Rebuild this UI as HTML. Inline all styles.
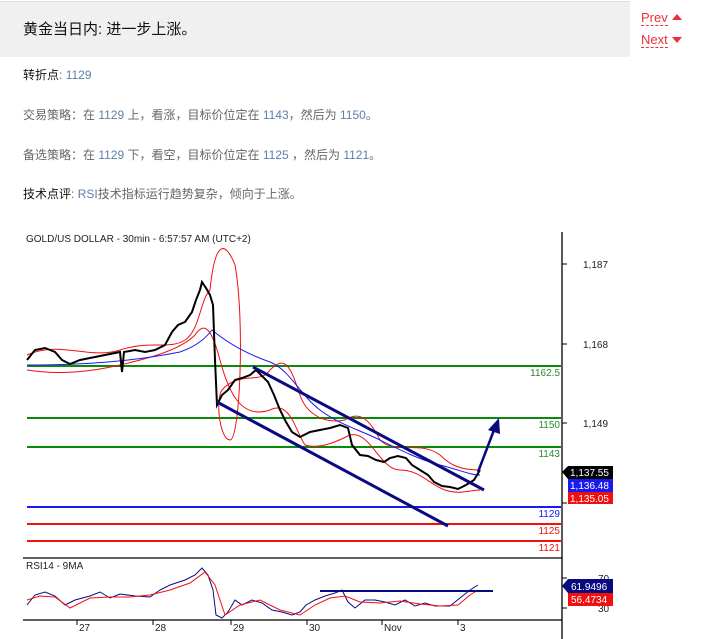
<!DOCTYPE html>
<html><head><meta charset="utf-8"><style>
body{margin:0;width:713px;height:639px;background:#fff;font-family:"Liberation Sans","Noto Sans CJK SC",sans-serif;position:relative;overflow:hidden}
.hdr{position:absolute;left:0;top:1px;width:630px;height:55px;background:#f0f0f0;border-top:1px solid #ddd}
.hdr span{position:absolute;left:23px;top:16px;font-size:15px;color:#111}
.nav{position:absolute;left:641px;font-size:13px;color:#e8303a;border-bottom:1px dashed #e8303a;line-height:15px}
.tri{position:absolute;left:672px;width:0;height:0;border-left:5px solid transparent;border-right:5px solid transparent}
.p{position:absolute;left:23px;font-size:12px;color:#666;white-space:nowrap}
.p b{font-weight:normal;color:#111}
.n{color:#5b7fa8}
</style></head><body>
<div class="hdr"><span>黄金当日内: 进一步上涨。</span></div>
<div class="nav" style="top:10px">Prev</div><div class="tri" style="top:14px;border-bottom:6px solid #e8303a"></div>
<div class="nav" style="top:32px">Next</div><div class="tri" style="top:37px;border-top:6px solid #e8303a"></div>
<div class="p" style="top:66px"><b>转折点</b>: <span class="n">1129</span></div>
<div class="p" style="top:106px">交易策略：在 <span class="n">1129</span> 上，看涨，目标价位定在 <span class="n">1143</span>，然后为 <span class="n">1150</span>。</div>
<div class="p" style="top:146px">备选策略：在 <span class="n">1129</span> 下，看空，目标价位定在 <span class="n">1125</span> ，然后为 <span class="n">1121</span>。</div>
<div class="p" style="top:185px"><b>技术点评</b>: <span class="n">RSI</span>技术指标运行趋势复杂，倾向于上涨。</div>
<svg style="position:absolute;left:0;top:0" width="713" height="639" font-family="Liberation Sans,sans-serif">
<text x="26" y="242" font-size="10" fill="#222">GOLD/US DOLLAR - 30min - 6:57:57 AM (UTC+2)</text>
<line x1="562" y1="232" x2="562" y2="639" stroke="#000" stroke-width="1.3"/>
<g stroke="#000"><line x1="562" y1="264" x2="567" y2="264"/><line x1="562" y1="344" x2="567" y2="344"/><line x1="562" y1="423" x2="567" y2="423"/><line x1="562" y1="503" x2="567" y2="503"/><line x1="562" y1="578" x2="567" y2="578"/><line x1="562" y1="608" x2="567" y2="608"/></g>
<g font-size="10" fill="#222"><text x="583" y="268">1,187</text><text x="583" y="348">1,168</text><text x="583" y="427">1,149</text><text x="598" y="582">70</text><text x="598" y="612">30</text></g>
<g stroke-width="2"><line x1="27" y1="366" x2="561" y2="366" stroke="#0a8a0a"/><line x1="27" y1="418" x2="561" y2="418" stroke="#0a8a0a"/><line x1="27" y1="447" x2="561" y2="447" stroke="#0a8a0a"/>
<line x1="27" y1="507" x2="561" y2="507" stroke="#1a1af0"/><line x1="27" y1="524" x2="561" y2="524" stroke="#f01010"/><line x1="27" y1="541" x2="561" y2="541" stroke="#f01010"/></g>
<g font-size="10" text-anchor="end"><text x="560" y="376" fill="#2a8a2a">1162.5</text><text x="560" y="428" fill="#2a8a2a">1150</text><text x="560" y="457" fill="#2a8a2a">1143</text><text x="560" y="517" fill="#1a1af0">1129</text><text x="560" y="534" fill="#f01010">1125</text><text x="560" y="551" fill="#f01010">1121</text></g>
<path d="M27 355 C60 340 90 360 120 350 S170 350 185 340 S200 300 210 290 C215 240 225 240 235 265 C245 320 240 440 230 440 C220 440 215 400 222 390 C240 370 260 385 270 370 C285 355 290 365 300 395 C305 410 320 425 345 420 C360 410 370 420 380 440 C395 455 420 440 440 455 C450 465 460 470 480 470" fill="none" stroke="#f01010" stroke-width="1"/>
<path d="M27 370 C60 375 90 372 120 365 S180 350 195 335 C205 320 212 330 220 360 C228 390 240 420 270 410 C290 400 295 430 305 445 C320 450 340 440 350 435 C370 430 380 470 400 470 C420 470 430 485 445 490 C460 495 470 490 480 490" fill="none" stroke="#f01010" stroke-width="1"/>
<path d="M27 365 C80 365 130 362 180 352 C200 345 208 335 212 330 C230 345 250 355 270 362 C290 370 300 395 320 410 C340 425 360 430 380 440 C400 450 420 460 440 465 C460 470 470 475 480 475" fill="none" stroke="#1a1af0" stroke-width="1"/>
<path d="M27 360 L35 350 L45 348 L55 352 L62 360 L70 364 L80 360 L90 358 L100 356 L110 354 L120 352 L122 372 L124 352 L135 350 L145 352 L155 350 L165 345 L172 332 L178 325 L185 322 L192 312 L196 300 L200 290 L202 282 L206 288 L210 295 L213 305 L215 360 L217 405 L222 395 L228 390 L235 380 L242 378 L250 375 L256 370 L262 376 L268 382 L274 395 L280 410 L286 422 L292 432 L300 437 L310 432 L320 430 L330 428 L340 425 L348 428 L352 445 L360 455 L368 456 L376 460 L384 462 L390 458 L398 456 L406 458 L412 465 L420 470 L428 475 L434 482 L442 486 L450 487 L458 489 L466 485 L474 480 L480 470" fill="none" stroke="#000" stroke-width="2"/>
<line x1="253" y1="367" x2="484" y2="490" stroke="#0a0a80" stroke-width="3"/>
<line x1="217" y1="402" x2="448" y2="526" stroke="#0a0a80" stroke-width="3"/>
<line x1="478" y1="472" x2="494" y2="430" stroke="#0a0a80" stroke-width="2.5"/>
<polygon points="499,418 500,434 488,430" fill="#0a0a80"/>
<path d="M487 472 L562 472 L568 466 L613 466 L613 479 L568 479 Z" fill="none"/>
<polygon points="562,472 568,466 613,466 613,479 568,479" fill="#000"/>
<rect x="568" y="479" width="45" height="13" fill="#1a1af0"/><rect x="568" y="492" width="45" height="12" fill="#f01010"/>
<g font-size="10" fill="#fff"><text x="570" y="476">1,137.55</text><text x="570" y="489">1,136.48</text><text x="570" y="502">1,135.05</text></g>
<line x1="23" y1="558" x2="562" y2="558" stroke="#000" stroke-width="1.3"/>
<text x="26" y="569" font-size="10" fill="#222">RSI14 - 9MA</text>
<path d="M27 605 L35 595 L45 592 L55 596 L65 605 L75 600 L90 596 L100 592 L110 598 L120 594 L135 596 L150 597 L160 590 L170 585 L185 580 L195 575 L202 568 L208 575 L213 590 L216 615 L222 618 L228 612 L235 600 L242 605 L252 600 L262 603 L272 610 L282 612 L292 615 L300 612 L306 605 L315 600 L325 596 L335 593 L342 590 L348 602 L355 608 L365 600 L375 600 L385 602 L395 605 L405 600 L415 606 L425 603 L435 606 L450 606 L460 598 L470 590 L478 585" fill="none" stroke="#0a0a80" stroke-width="1"/>
<path d="M27 600 L40 596 L55 597 L70 608 L90 598 L110 597 L130 597 L150 595 L170 590 L190 583 L205 572 L215 585 L225 615 L240 605 L260 600 L280 610 L300 615 L315 605 L330 598 L345 596 L360 602 L380 603 L400 601 L420 604 L440 606 L458 605 L470 595 L478 590" fill="none" stroke="#f01010" stroke-width="1"/>
<line x1="320" y1="591" x2="493" y2="591" stroke="#0a0a80" stroke-width="2"/>
<polygon points="562,586 568,579 613,579 613,593 568,593" fill="#0a0a80"/><rect x="568" y="593" width="45" height="13" fill="#f01010"/>
<g font-size="10" fill="#fff"><text x="571" y="590">61.9496</text><text x="571" y="603">56.4734</text></g>
<line x1="23" y1="620" x2="562" y2="620" stroke="#000" stroke-width="1.3"/>
<g stroke="#000"><line x1="77" y1="620" x2="77" y2="625"/><line x1="153" y1="620" x2="153" y2="625"/><line x1="231" y1="620" x2="231" y2="625"/><line x1="307" y1="620" x2="307" y2="625"/><line x1="382" y1="620" x2="382" y2="625"/><line x1="458" y1="620" x2="458" y2="625"/></g>
<g font-size="10" fill="#222"><text x="79" y="631">27</text><text x="155" y="631">28</text><text x="233" y="631">29</text><text x="309" y="631">30</text><text x="384" y="631">Nov</text><text x="460" y="631">3</text></g>
</svg>
</body></html>
